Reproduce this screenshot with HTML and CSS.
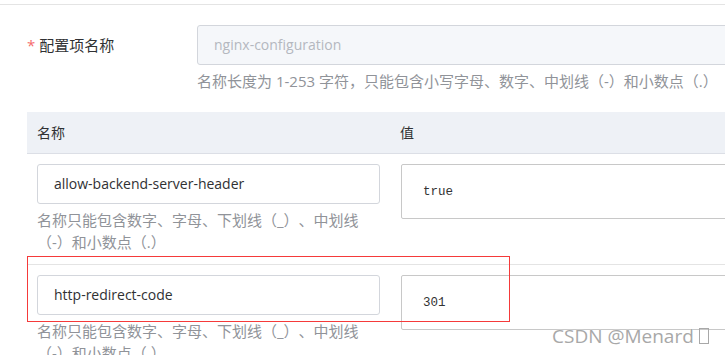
FILE: index.html
```html
<!DOCTYPE html>
<html lang="zh-CN">
<head>
    <meta charset="UTF-8">
    <title>配置项</title>
    <link rel="stylesheet" href="styles.css">
</head>
<body>
    <div class="page">
        <div class="top-rule"></div>

        <!-- Config name -->
        <div class="form-item">
            <label class="form-label"><span class="required">*</span> 配置项名称</label>
            <div class="form-content">
                <div class="input disabled">nginx-configuration</div>
                <div class="hint">名称长度为 1-253 字符，只能包含小写字母、数字、中划线（-）和小数点（.）</div>
            </div>
        </div>

        <!-- Key / value table -->
        <div class="kv-table">
            <div class="kv-head">
                <div class="cell-name">名称</div>
                <div class="cell-value">值</div>
            </div>

            <div class="kv-row">
                <div class="cell-name">
                    <div class="input">allow-backend-server-header</div>
                    <div class="hint">名称只能包含数字、字母、下划线（_）、中划线（-）和小数点（.）</div>
                </div>
                <div class="cell-value">
                    <div class="textarea">true</div>
                </div>
            </div>

            <div class="kv-row">
                <div class="cell-name">
                    <div class="input">http-redirect-code</div>
                    <div class="hint">名称只能包含数字、字母、下划线（_）、中划线（-）和小数点（.）</div>
                </div>
                <div class="cell-value">
                    <div class="textarea">301</div>
                </div>
            </div>
        </div>

        <div class="mark-box"></div>
        <div class="watermark">CSDN @Menard <span class="tofu"></span></div>
    </div>
</body>
</html>
```

FILE: styles.css
```css
/* Global */
body {
    margin: 0;
    background: #fff;
    font-family: 'Open Sans', 'Noto Sans CJK SC', sans-serif;
    font-size: 14px;
    color: #303133;
    overflow: hidden;
    text-spacing-trim: space-all;
}

.page {
    position: relative;
    width: 800px;
    height: 355px;
    overflow: hidden;
}

.top-rule {
    margin-top: 4px;
    border-top: 1px solid #e4e4e4;
}

/* Form row */
.form-item {
    display: flex;
    padding-left: 27px;
    margin-top: 20px;
}

.form-label {
    width: 170px;
    line-height: 40px;
    font-size: 15px;
    color: #303133;
}

.required {
    color: #f56c6c;
}

.form-content {
    flex: 1;
}

.input {
    height: 38px;
    line-height: 38px;
    padding-left: 16px;
    border: 1px solid #d3d6dc;
    border-radius: 3px;
    background: #fff;
    white-space: nowrap;
}

.input.disabled {
    background: #f5f7fa;
    color: #b4b8bf;
}

.hint {
    margin-top: 5px;
    line-height: 22px;
    color: #909399;
    font-size: 15px;
}

/* Table */
.kv-table {
    margin: 20px 0 0 27px;
}

.kv-head {
    display: flex;
    height: 41px;
    line-height: 41px;
    background: #eef1f6;
    border-bottom: 1px solid #dcdfe6;
}

.kv-head .cell-name {
    padding-left: 10px;
}

.kv-head .cell-value {
    padding-left: 10px;
}

.kv-row {
    display: flex;
    padding-top: 10px;
    height: 100px;
    border-bottom: 1px solid #e4e4e4;
}

.cell-name {
    width: 343px;
    padding: 0 10px;
    flex-shrink: 0;
}

.cell-value {
    flex: 1;
    padding-left: 11px;
}

.textarea {
    height: 53px;
    display: flex;
    align-items: center;
    padding-left: 21px;
    border: 1px solid #c8c8c8;
    border-radius: 2px;
    font-family: 'Liberation Mono', monospace;
    font-size: 12.5px;
    color: #333;
}

/* Annotation overlay */
.mark-box {
    position: absolute;
    left: 27px;
    top: 256px;
    width: 481px;
    height: 64px;
    border: 1px solid #f53a3a;
}

.watermark {
    position: absolute;
    left: 552px;
    top: 323px;
    font-family: 'Open Sans', sans-serif;
    font-size: 19px;
    color: #a8a8a8;
    text-shadow: 0 0 1px #fff;
}

.tofu {
    display: inline-block;
    width: 8px;
    height: 14px;
    border: 1px solid #a8a8a8;
    vertical-align: -1px;
}
```
